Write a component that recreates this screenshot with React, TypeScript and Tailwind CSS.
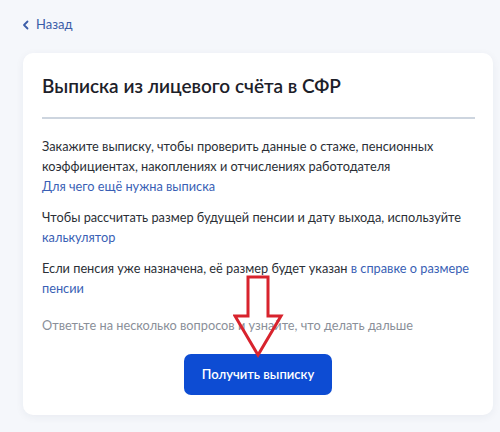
import React from "react";

export default function App() {
  return (
    <div className="min-h-[432px] w-[500px] bg-[#f5f7fb] font-['Lato',sans-serif] text-[#2b2f36]">
      <div className="px-[23px] pt-[14px]">
        {/* back link */}
        <a className="-ml-[1px] flex h-[22px] items-center gap-[6px] text-[13px] text-[#3b5da8]">
          <svg width="8" height="10" viewBox="0 0 8 10" fill="none">
            <path d="M5.5 1.5 2 5l3.5 3.5" stroke="currentColor" strokeWidth="1.8" strokeLinecap="round" strokeLinejoin="round" />
          </svg>
          Назад
        </a>

        {/* card */}
        <div className="relative mt-[17px] w-[470px] rounded-[10px] bg-white px-[19px] pb-[20px] pt-[19px] shadow-[0_2px_8px_rgba(30,50,90,0.06)]">
          <h1 className="text-[19px] font-semibold leading-[28px] text-[#1c2029]">
            Выписка из лицевого счёта в СФР
          </h1>
          <div className="mt-[17px] h-[2px] w-[433px] bg-[#cdd5df]"></div>

          <div className="mt-[17px] flex flex-col gap-[11px] text-[12.75px] leading-[20px]">
            <p>
              Закажите выписку, чтобы проверить данные о стаже, пенсионных
              коэффициентах, накоплениях и отчислениях работодателя
              <br />
              <a className="text-[#3a5fb5]">Для чего ещё нужна выписка</a>
            </p>
            <p>
              Чтобы рассчитать размер будущей пенсии и дату выхода, используйте{" "}
              <a className="text-[#3a5fb5]">калькулятор</a>
            </p>
            <p>
              Если пенсия уже назначена, её размер будет указан{" "}
              <a className="text-[#3a5fb5]">в справке о размере пенсии</a>
            </p>
            <p className="mt-[6px] text-[#8a8f99]">
              Ответьте на несколько вопросов и узнайте, что делать дальше
            </p>
          </div>

          <div className="mt-[19px] flex justify-center">
            <button className="h-[41px] w-[148px] rounded-[7px] bg-[#0d4cd3] text-[13px] font-semibold text-white">
              Получить выписку
            </button>
          </div>

          {/* red annotation arrow */}
          <svg
            className="absolute left-[210px] top-[222px]"
            width="52"
            height="84"
            viewBox="0 0 52 84"
            fill="none"
          >
            <path
              d="M15 2H35V41H48L25 80L2 41H15Z"
              stroke="#d8232d"
              strokeWidth="3"
              strokeLinejoin="miter"
            />
          </svg>
        </div>
      </div>
    </div>
  );
}
